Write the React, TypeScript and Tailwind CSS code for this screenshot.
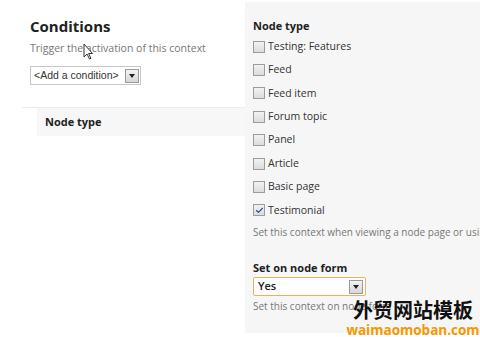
import { Check } from 'lucide-react';

const nodeTypes = [
  { label: 'Testing: Features', checked: false },
  { label: 'Feed', checked: false },
  { label: 'Feed item', checked: false },
  { label: 'Forum topic', checked: false },
  { label: 'Panel', checked: false },
  { label: 'Article', checked: false },
  { label: 'Basic page', checked: false },
  { label: 'Testimonial', checked: true },
];

function SelectArrow() {
  return (
    <span className="flex h-[14px] w-[14px] shrink-0 items-center justify-center border border-[#9a9a9a] bg-gradient-to-b from-[#f4f4f4] to-[#d6d6d6]">
      <span className="h-0 w-0 border-x-[3px] border-t-[4px] border-x-transparent border-t-[#222]" />
    </span>
  );
}

function Checkbox({ checked }: { checked: boolean }) {
  return (
    <span className="flex h-[12px] w-[12px] shrink-0 items-center justify-center border border-[#9c9c9c] bg-gradient-to-b from-[#f2f2f2] to-[#dcdcdc]">
      {checked && <Check className="h-[9px] w-[9px] text-[#2b4f9c]" strokeWidth={3} />}
    </span>
  );
}

function Cursor() {
  return (
    <svg className="absolute left-[83px] top-[43px]" width="11" height="17" viewBox="0 0 11 17">
      <path d="M1 1 L1 14 L4 11 L6.5 16 L8 15.3 L5.6 10.5 L9.5 10.5 Z" fill="#fff" stroke="#333" strokeWidth="1" />
    </svg>
  );
}

export default function App() {
  return (
    <div className="relative flex h-[337px] w-[480px] overflow-hidden bg-white font-['Open_Sans',sans-serif] text-[#333]">
      <div className="relative w-[245px] shrink-0">
        <div className="px-[30px] pt-[15px]">
          <h2 className="text-[15px] font-bold leading-[22px] text-[#222]">Conditions</h2>
          <p className="mt-[4px] text-[10.5px] leading-[14px] text-[#777]">Trigger the activation of this context</p>
          <div className="mt-[11px] flex h-[19px] w-[111px] items-center justify-between border border-[#c8c8c8] bg-white pl-[3px] pr-[1px] font-['Liberation_Sans',sans-serif] text-[10.5px] text-[#333]">
            <span className="whitespace-nowrap">&lt;Add a condition&gt;</span>
            <SelectArrow />
          </div>
        </div>
        <Cursor />
        <div className="ml-[22px] mt-[22px] border-t border-[#ececec]">
          <div className="ml-[15px] flex h-[28px] items-center bg-[#f7f7f7] pl-[8px] text-[11px] font-bold text-[#222]">
            Node type
          </div>
        </div>
      </div>

      <div className="mt-[2px] mb-[4px] flex-1 bg-[#f6f6f6] pl-[8px] pt-[17px] text-[10.5px]">
        <div className="text-[11px] font-bold leading-[14px] text-[#222]">Node type</div>
        <div className="mt-[2px] flex flex-col">
          {nodeTypes.map((t) => (
            <label key={t.label} className="flex h-[23.4px] items-center gap-[3px] text-[#333]">
              <Checkbox checked={t.checked} />
              <span>{t.label}</span>
            </label>
          ))}
        </div>
        <p className="mt-[3px] whitespace-nowrap text-[10px] text-[#777]">Set this context when viewing a node page or using the add/edit form</p>
        <div className="mt-[21px] text-[11px] font-bold leading-[14px] text-[#222]">Set on node form</div>
        <div className="mt-[2px] flex h-[19px] w-[113px] items-center justify-between rounded-[2px] border border-[#e2b65e] bg-white pl-[4px] pr-[2px] text-[11px] font-semibold text-[#222]">
          <span>Yes</span>
          <SelectArrow />
        </div>
        <p className="mt-[3px] whitespace-nowrap text-[10px] text-[#777]">Set this context on node form</p>
      </div>

      <div className="absolute left-[352px] top-[300px] flex w-[122px] flex-col items-center whitespace-nowrap leading-none">
        <span className="font-['Noto_Sans_CJK_SC',sans-serif] text-[20px] font-bold text-[#111]">外贸网站模板</span>
        <span className="mt-[4px] font-['Open_Sans',sans-serif] text-[13.5px] font-bold text-[#f39800]">waimaomoban.com</span>
      </div>
    </div>
  );
}
